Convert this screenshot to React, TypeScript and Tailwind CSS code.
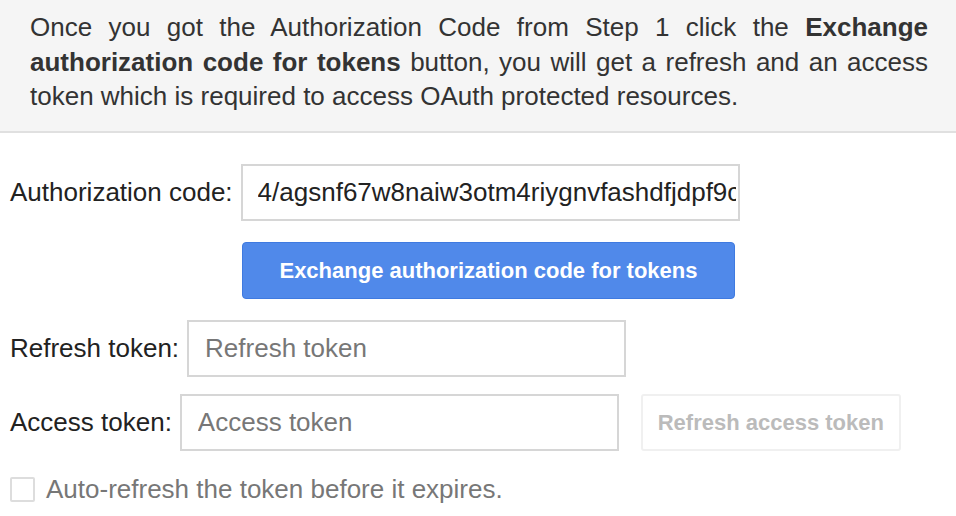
export default function App() {
  const font = { fontFamily: '"Liberation Sans", Arial, sans-serif' };

  return (
    <div className="w-[956px] h-[516px] bg-white overflow-hidden" style={font}>
      {/* ── Intro panel ─────────────────────────────────── */}
      <div className="bg-[#f5f5f5] border-b-2 border-[#e0e0e0] pl-[30px] pr-[28px] pt-[10px] h-[133px]">
        <p className="text-[26px] leading-[34.5px] text-[#333333] text-justify">
          Once you got the Authorization Code from Step 1 click the{" "}
          <b>Exchange authorization code for tokens</b> button, you will get a
          refresh and an access token which is required to access OAuth
          protected resources.
        </p>
      </div>

      {/* ── Form ────────────────────────────────────────── */}
      <div className="pl-[10px] pt-[31px] flex flex-col">
        <div className="flex items-center gap-[8px]">
          <label className="text-[26px] text-[#222222]">Authorization code:</label>
          <input
            readOnly
            value="4/agsnf67w8naiw3otm4riygnvfashdfjdpf9cm2kd8s"
            className="w-[499px] h-[57px] border-2 border-[#d6d6d6] pl-[15px] pr-[2px] text-[26px] text-[#222222] outline-none bg-white"
            style={font}
          />
        </div>

        <button
          className="ml-[232px] mt-[21px] w-[493px] h-[57px] rounded-[4px] bg-[#5089ea] border border-[#3f7ae0] text-white font-bold text-[22px]"
          style={font}
        >
          Exchange authorization code for tokens
        </button>

        <div className="flex items-center gap-[8px] mt-[21px]">
          <label className="text-[26px] text-[#222222]">Refresh token:</label>
          <input
            placeholder="Refresh token"
            className="w-[439px] h-[57px] border-2 border-[#d6d6d6] pl-[16px] text-[26px] text-[#222222] placeholder:text-[#777777] outline-none bg-white"
            style={font}
          />
        </div>

        <div className="flex items-center mt-[17px]">
          <label className="text-[26px] text-[#222222] mr-[8px]">Access token:</label>
          <input
            placeholder="Access token"
            className="w-[439px] h-[57px] border-2 border-[#d6d6d6] pl-[16px] text-[26px] text-[#222222] placeholder:text-[#777777] outline-none bg-white"
            style={font}
          />
          <button
            disabled
            className="ml-[22px] w-[260px] h-[57px] rounded-[3px] border-2 border-[#f0f0f0] bg-white text-[#bbbbbb] font-bold text-[22px]"
            style={font}
          >
            Refresh access token
          </button>
        </div>

        <label className="flex items-center mt-[26px] gap-[11px] h-[25px]">
          <span className="w-[25px] h-[25px] border-2 border-[#dddddd] rounded-[2px] bg-white" />
          <span className="text-[26px] leading-[25px] text-[#777777]">
            Auto-refresh the token before it expires.
          </span>
        </label>
      </div>
    </div>
  );
}
